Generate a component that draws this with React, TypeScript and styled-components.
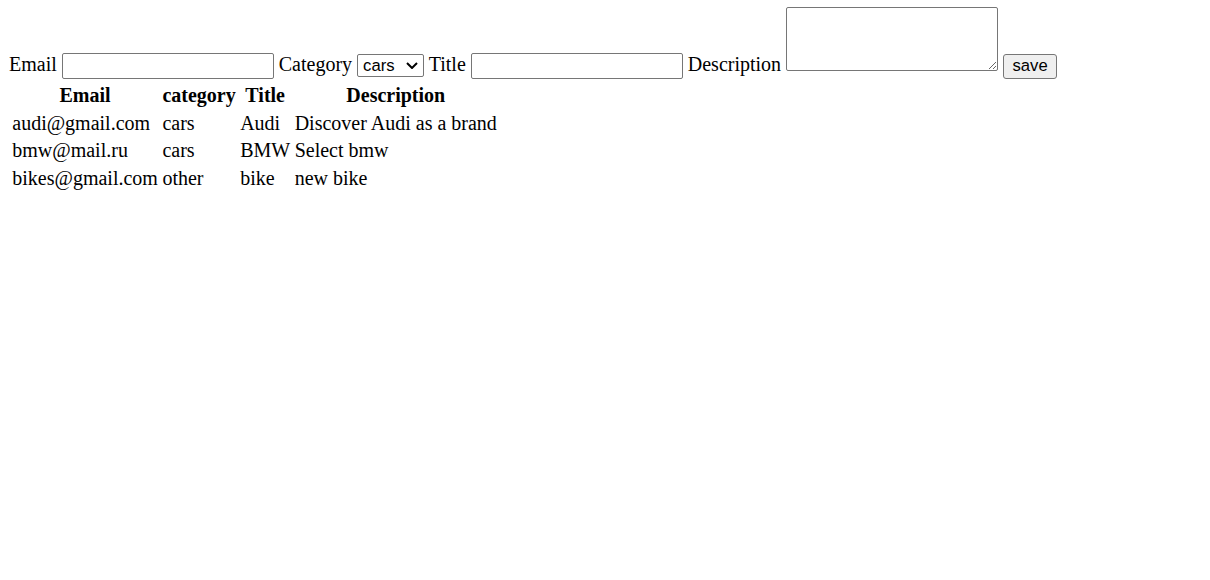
import React from 'react'
import styled, { createGlobalStyle } from 'styled-components'

// Screenshot was taken at 125% zoom, so the browser defaults are scaled by 1.25
const GlobalStyle = createGlobalStyle`
  body {
    margin: 7px 9px;
    font-family: "Liberation Serif", "Times New Roman", serif;
    font-size: 20px;
    color: #000;
    background: #fff;
  }
`

const controlFont = `
  font-family: "Liberation Sans", Arial, sans-serif;
  font-size: 16.67px;
  color: #000;
`

const Form = styled.form`
  margin: 0;
`

const TextInput = styled.input`
  ${controlFont};
  box-sizing: border-box;
  width: 212px;
  height: 26px;
  margin: 0;
  padding: 1px 3px;
  border: 1px solid #767676;
  border-radius: 2px;
  background: #fff;
`

const SelectWrap = styled.span`
  position: relative;
  display: inline-block;
`

const Select = styled.select`
  ${controlFont};
  appearance: none;
  box-sizing: border-box;
  width: 67px;
  height: 23px;
  margin: 0;
  padding: 0 2px 0 5px;
  border: 1px solid #767676;
  border-radius: 2px;
  background: #fff;
`

const Chevron = styled.svg`
  position: absolute;
  right: 6px;
  top: 50%;
  margin-top: -3px;
  pointer-events: none;
`

const TextArea = styled.textarea`
  ${controlFont};
  font-family: "Liberation Mono", monospace;
  box-sizing: border-box;
  width: 212px;
  height: 64px;
  margin: 0;
  padding: 2px;
  border: 1px solid #767676;
  border-radius: 2px;
  vertical-align: baseline;
`

const SaveButton = styled.button`
  ${controlFont};
  box-sizing: border-box;
  width: 54px;
  height: 25px;
  margin: 0;
  padding: 1px 7px;
  border: 1px solid #767676;
  border-radius: 3px;
  background: #efefef;
`

const Table = styled.table`
  margin-top: 2px;
  border-spacing: 2.5px;
`

const HeadCell = styled.th`
  padding: 1.25px;
  font-weight: bold;
`

const Cell = styled.td`
  padding: 1.25px;
`

interface Post {
  email: string
  category: string
  title: string
  description: string
}

const posts: Post[] = [
  { email: 'audi@gmail.com', category: 'cars', title: 'Audi', description: 'Discover Audi as a brand' },
  { email: 'bmw@mail.ru', category: 'cars', title: 'BMW', description: 'Select bmw' },
  { email: 'bikes@gmail.com', category: 'other', title: 'bike', description: 'new bike' }
]

const App = (): JSX.Element => {
  return (
    <>
      <GlobalStyle />
      <Form onSubmit={(e) => e.preventDefault()}>
        Email <TextInput type="text" /> Category{' '}
        <SelectWrap>
          <Select defaultValue="cars">
            <option value="cars">cars</option>
            <option value="other">other</option>
          </Select>
          <Chevron width="12" height="7" viewBox="0 0 12 7">
            <path d="M1 1l5 5 5-5" fill="none" stroke="#000" strokeWidth="2" />
          </Chevron>
        </SelectWrap>{' '}
        Title <TextInput type="text" /> Description <TextArea /> <SaveButton type="submit">save</SaveButton>
      </Form>
      <Table>
        <thead>
          <tr>
            <HeadCell>Email</HeadCell>
            <HeadCell>category</HeadCell>
            <HeadCell>Title</HeadCell>
            <HeadCell>Description</HeadCell>
          </tr>
        </thead>
        <tbody>
          {posts.map((p) => (
            <tr key={p.email}>
              <Cell>{p.email}</Cell>
              <Cell>{p.category}</Cell>
              <Cell>{p.title}</Cell>
              <Cell>{p.description}</Cell>
            </tr>
          ))}
        </tbody>
      </Table>
    </>
  )
}

export default App
